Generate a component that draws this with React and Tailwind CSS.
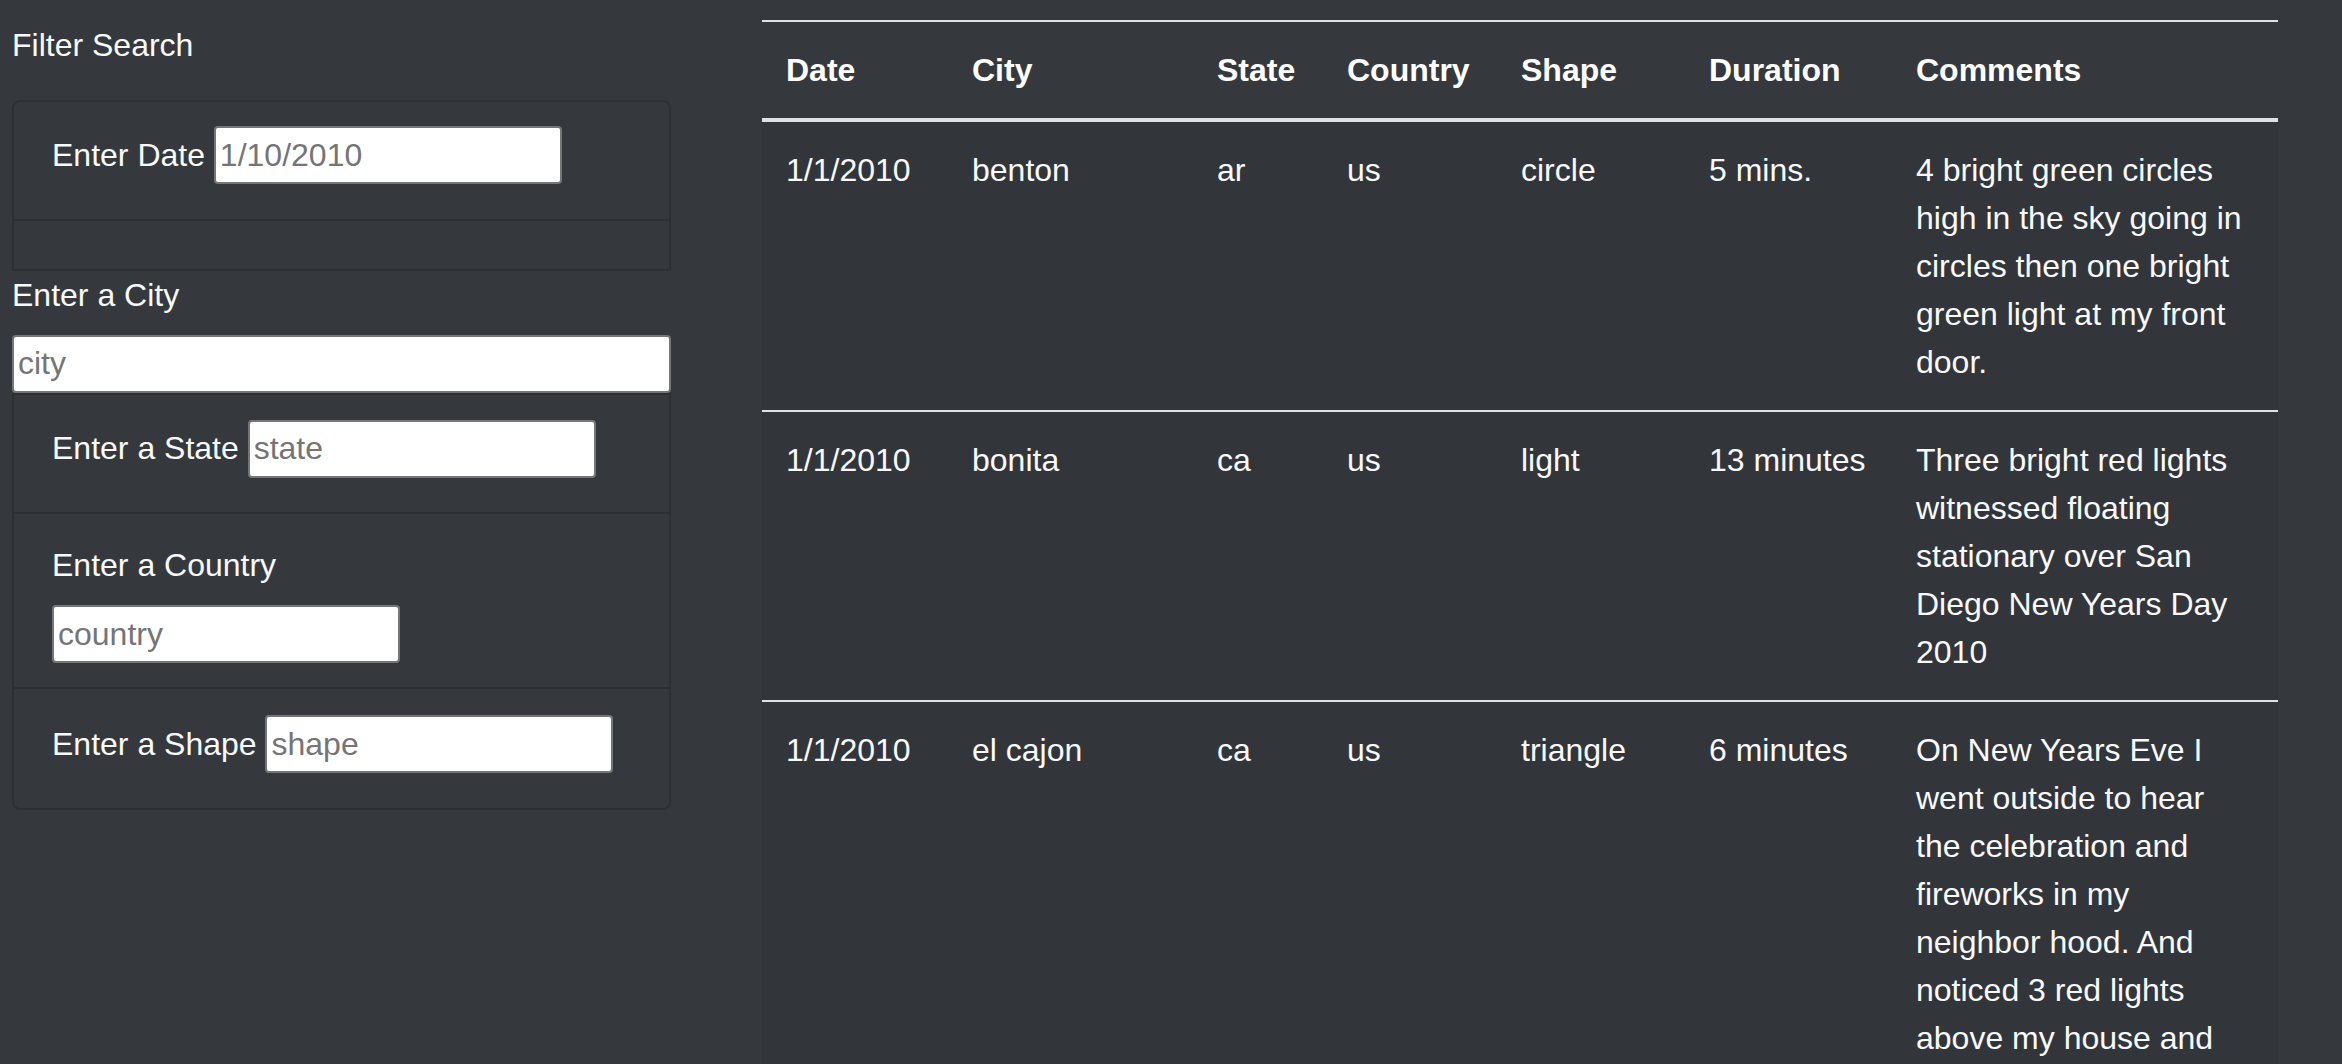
const sightings = [
  {
    datetime: "1/1/2010",
    city: "benton",
    state: "ar",
    country: "us",
    shape: "circle",
    durationMinutes: "5 mins.",
    comments:
      "4 bright green circles high in the sky going in circles then one bright green light at my front door.",
  },
  {
    datetime: "1/1/2010",
    city: "bonita",
    state: "ca",
    country: "us",
    shape: "light",
    durationMinutes: "13 minutes",
    comments:
      "Three bright red lights witnessed floating stationary over San Diego New Years Day 2010",
  },
  {
    datetime: "1/1/2010",
    city: "el cajon",
    state: "ca",
    country: "us",
    shape: "triangle",
    durationMinutes: "6 minutes",
    comments:
      "On New Years Eve I went outside to hear the celebration and fireworks in my neighbor hood. And noticed 3 red lights above my house and they were in a triangle formation moving slowly to the east.",
  },
  {
    datetime: "1/1/2010",
    city: "ramona",
    state: "ca",
    country: "us",
    shape: "fireball",
    durationMinutes: "10 minutes",
    comments: "Four orange lights moving slowly across the sky in a line",
  },
];

const columns = [
  { label: "Date", key: "datetime", width: "w-[186px]" },
  { label: "City", key: "city", width: "w-[245px]" },
  { label: "State", key: "state", width: "w-[130px]" },
  { label: "Country", key: "country", width: "w-[174px]" },
  { label: "Shape", key: "shape", width: "w-[188px]" },
  { label: "Duration", key: "durationMinutes", width: "w-[207px]" },
  { label: "Comments", key: "comments", width: "w-[386px]" },
];

const inputClass =
  "h-[58px] w-[348px] rounded-[4px] border-2 border-[#767676] bg-white px-[4px] align-baseline text-[#212529] placeholder:text-[#757575] outline-none";

const liBorder = "border-[#2c3035]";

const FilterPanel = () => (
  <div className="w-[672px] shrink-0 pl-[12px]">
    <p className="mt-[21px]">Filter Search</p>
    <ul className="mt-[31px] w-[659px]">
      {/* Date */}
      <li className={`rounded-t-[8px] border-2 ${liBorder} px-[38px] py-[24px]`}>
        <label htmlFor="datetime" className="mb-[16px] inline-block">
          Enter Date
        </label>{" "}
        <input id="datetime" type="text" placeholder="1/10/2010" className={inputClass} />
      </li>
      <li className={`h-[50px] border-x-2 border-b-2 ${liBorder}`}></li>

      {/* City (sits outside any list item, like the original markup) */}
      <label htmlFor="city" className="mb-[16px] block">
        Enter a City
      </label>
      <input
        id="city"
        type="text"
        placeholder="city"
        className="block h-[58px] w-full rounded-[4px] border-2 border-[#767676] bg-white px-[4px] text-[#212529] placeholder:text-[#757575] outline-none"
      />

      {/* State */}
      <li className={`border-2 ${liBorder} px-[38px] pt-[25px] pb-[24px]`}>
        <label htmlFor="state" className="mb-[16px] inline-block">
          Enter a State
        </label>{" "}
        <input id="state" type="text" placeholder="state" className={inputClass} />
      </li>

      {/* Country */}
      <li className={`border-x-2 border-b-2 ${liBorder} px-[38px] pt-[27px] pb-[24px]`}>
        <label htmlFor="country" className="mb-[16px] block">
          Enter a Country
        </label>
        <input id="country" type="text" placeholder="country" className={inputClass} />
      </li>

      {/* Shape */}
      <li className={`rounded-b-[8px] border-x-2 border-b-2 ${liBorder} px-[38px] pt-[26px] pb-[24px]`}>
        <label htmlFor="shape" className="mb-[16px] inline-block">
          Enter a Shape
        </label>{" "}
        <input id="shape" type="text" placeholder="shape" className={inputClass} />
      </li>
    </ul>
  </div>
);

const UfoTable = ({ rows }) => (
  <table className="mt-[20px] ml-[90px] w-[1516px] shrink-0 table-fixed border-collapse self-start">
    <thead>
      <tr>
        {columns.map(({ label, width }) => (
          <th
            key={label}
            className={`${width} border-t-2 border-b-4 border-[#dee2e6] p-[24px] text-left align-bottom font-bold text-white`}
          >
            {label}
          </th>
        ))}
      </tr>
    </thead>
    <tbody className="bg-[#32363a]">
      {rows.map((row, index) => (
        <tr key={`${row.city}-${index}`}>
          {columns.map(({ key }) => (
            <td
              key={key}
              className={`border-t-2 border-[#dee2e6] p-[24px] align-top ${
                key === "comments" ? "" : "whitespace-nowrap"
              }`}
            >
              {row[key]}
            </td>
          ))}
        </tr>
      ))}
    </tbody>
  </table>
);

export default function App() {
  return (
    <div className="flex min-h-screen bg-[#35393e] font-['Liberation_Sans',Arial,sans-serif] text-[32px] leading-[48px] text-[#f8f9fa]">
      <FilterPanel />
      <UfoTable rows={sightings} />
    </div>
  );
}
